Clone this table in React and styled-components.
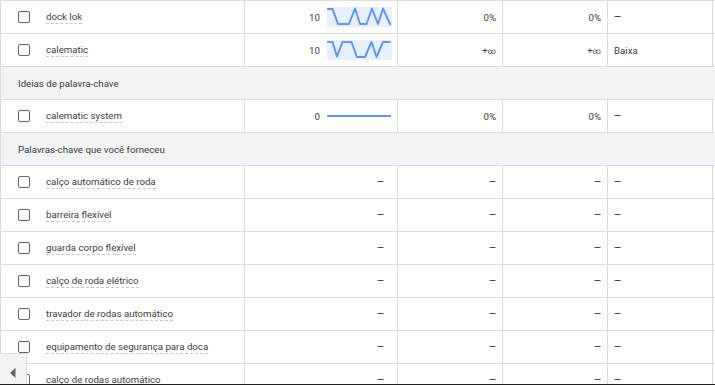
import React from "react";
import styled, { createGlobalStyle } from "styled-components";

const GlobalStyle = createGlobalStyle`
  html, body {
    margin: 0;
    padding: 0;
    background: #fefefc;
    overflow: hidden;
  }
  body {
    font-family: Roboto, "Liberation Sans", Arial, sans-serif;
  }
`;

const SPARK_UP = "0,2 5.5,2 11,17 22,17 28,1.5 33,17 39.5,17 45,1.5 51,17 56,1.5 63.5,18";
const SPARK_DOWN = "0,2 5.5,2 10,16.5 15.5,2 24.5,2 30,17 38,17 44.5,2 49.5,17 56,2 63.5,2";

const topRows = [
  { keyword: "dock lok", searches: "10", spark: SPARK_UP, a: "0%", b: "0%" },
  { keyword: "calematic", searches: "10", spark: SPARK_DOWN, a: "+∞", b: "+∞", c: "Baixa" },
];

const ideaRows = [
  { keyword: "calematic system", searches: "0", flat: true, a: "0%", b: "0%" },
];

const givenRows = [
  "calço automático de roda",
  "barreira flexível",
  "guarda corpo flexível",
  "calço de roda elétrico",
  "travador de rodas automático",
  "equipamento de segurança para doca",
  "calço de rodas automático",
];

const DASH = "—";

/**
 * Component declaration
 */
export default function App() {
  return (
    <>
      <GlobalStyle />
      <Table>
        {topRows.map((r) => (
          <KeywordRow key={r.keyword} row={r} />
        ))}
        <GroupRow>Ideias de palavra-chave</GroupRow>
        {ideaRows.map((r) => (
          <KeywordRow key={r.keyword} row={r} />
        ))}
        <GroupRow>Palavras-chave que você forneceu</GroupRow>
        {givenRows.map((k) => (
          <KeywordRow key={k} row={{ keyword: k }} />
        ))}
      </Table>
      <ScrollLeft>
        <svg width="6" height="10" viewBox="0 0 6 10">
          <polygon points="5.5,0 5.5,10 0,5" fill="#5f6368" />
        </svg>
      </ScrollLeft>
      <BottomEdge />
    </>
  );
}

function Value({ v }) {
  if (!v) return <Dash>{DASH}</Dash>;
  if (v === "+∞") return <span>+<Inf>∞</Inf></span>;
  return <span>{v}</span>;
}

function KeywordRow({ row }) {
  const empty = !row.searches;
  return (
    <Row>
      <KeywordCell>
        <Checkbox />
        <Keyword>{row.keyword}</Keyword>
      </KeywordCell>
      <SearchCell empty={empty}>
        {empty ? (
          <Dash>{DASH}</Dash>
        ) : (
          <>
            <span>{row.searches}</span>
            <Spark width="65" height="20" viewBox="0 0 65 20">
              {row.flat ? (
                <line x1="0" y1="10" x2="64" y2="10" stroke="#5e97f6" strokeWidth="2" />
              ) : (
                <>
                  <rect x="0" y="0" width="65" height="20" fill="#e8f0fe" />
                  <polyline
                    points={row.spark}
                    fill="none"
                    stroke="#5e97f6"
                    strokeWidth="2"
                    strokeLinejoin="round"
                  />
                </>
              )}
            </Spark>
          </>
        )}
      </SearchCell>
      <NumCell><Value v={row.a} /></NumCell>
      <NumCell><Value v={row.b} /></NumCell>
      <TextCell><Value v={row.c} /></TextCell>
      <TextCell />
    </Row>
  );
}

/**
 * Styled components declaration
 */
const Table = styled.div`
  width: 100%;
  height: 385px;
  overflow: hidden;
  font-size: 9.7px;
  color: #3c4043;
`;

const Row = styled.div`
  display: grid;
  grid-template-columns: 244px 153px 105px 105px 105px 1fr;
  height: 33px;
  box-sizing: border-box;
  border-top: 1px solid #dadce0;
`;

const Cell = styled.div`
  display: flex;
  align-items: center;
  border-left: 1px solid #dadce0;
  min-width: 0;
`;

const KeywordCell = styled(Cell)`
  padding-left: 17px;
  gap: 16px;
`;

const Checkbox = styled.div`
  width: 12px;
  height: 12px;
  box-sizing: border-box;
  border: 1.5px solid #5f6368;
  border-radius: 2px;
  flex: none;
`;

const Keyword = styled.span`
  border-bottom: 1px dashed #c4c7cc;
  line-height: 12px;
  padding-top: 1px;
  white-space: nowrap;
`;

const Dash = styled.span`
  font-size: 9px;
  font-weight: 500;
  color: #3c4043;
`;

const Inf = styled.span`
  font-size: 8px;
`;

const SearchCell = styled(Cell)`
  justify-content: flex-end;
  gap: 7px;
  padding-right: ${(props) => (props.empty ? "13px" : "5px")};
`;

const Spark = styled.svg`
  display: block;
  flex: none;
`;

const NumCell = styled(Cell)`
  justify-content: flex-end;
  padding-right: 6px;
`;

const TextCell = styled(Cell)`
  padding-left: 6px;
`;

const GroupRow = styled.div`
  height: 33px;
  box-sizing: border-box;
  border-top: 1px solid #dadce0;
  border-left: 1px solid #dadce0;
  background: #f1f3f4;
  display: flex;
  align-items: center;
  padding-left: 17px;
`;

const ScrollLeft = styled.div`
  position: fixed;
  left: 0;
  bottom: 1px;
  width: 27px;
  height: 31px;
  background: #f1f3f4;
  border-top: 1px solid #dadce0;
  border-right: 1px solid #dadce0;
  box-sizing: border-box;
  display: flex;
  align-items: center;
  justify-content: center;
  padding-top: 7px;
`;

const BottomEdge = styled.div`
  position: fixed;
  left: 0;
  right: 0;
  bottom: 0;
  height: 1px;
  background: #202124;
`;
